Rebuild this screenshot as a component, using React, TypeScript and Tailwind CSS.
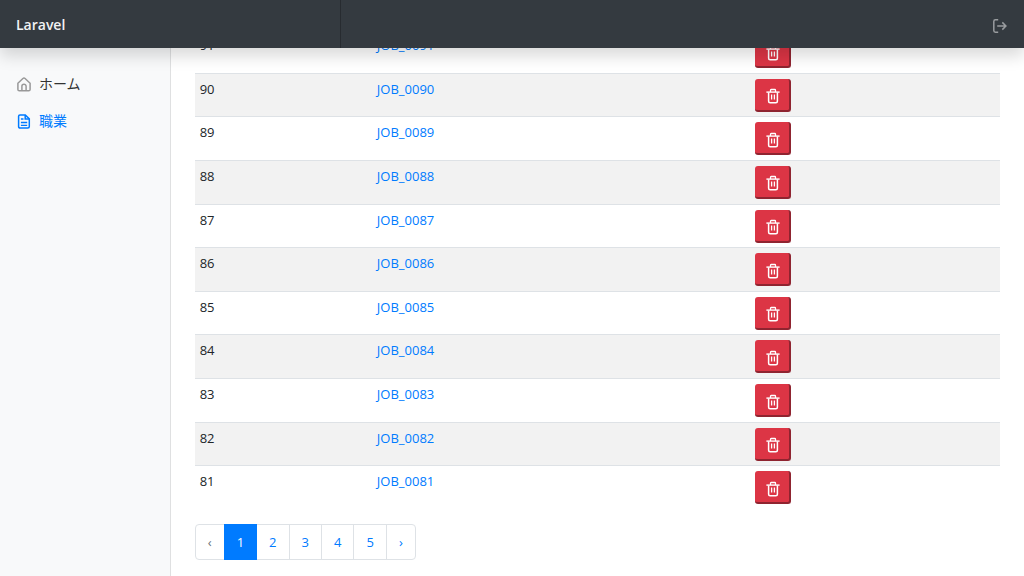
function HomeIcon() {
  return (
    <svg width="14" height="15" viewBox="0 0 14 15" fill="none" stroke="currentColor" strokeWidth="1.5">
      <path d="M.9 6.2 5.9 1.5Q7 .6 8.1 1.5L13.1 6.2V12.4Q13.1 13.8 11.7 13.8H2.3Q.9 13.8.9 12.4Z" />
      <path d="M4.9 13.8V9.3a2.1 2.1 0 0 1 4.2 0V13.8" />
    </svg>
  );
}

function FileIcon() {
  return (
    <svg width="14" height="15" viewBox="0 0 14 15" fill="none" stroke="currentColor" strokeWidth="1.5">
      <path d="M3 .9H8.300L12.300 4.900V12.600Q12.300 14.100 10.800 14.100H3.100Q1.600 14.100 1.600 12.600V2.300Q1.600.9 3 .9Z" />
      <path d="M8.200 1V5H12.200" />
      <path d="M3.900 5H6.500M3.900 8.500H10.200M3.900 11.400H10.200" strokeWidth="1.3" />
    </svg>
  );
}

function TrashIcon() {
  return (
    <svg width="14" height="16" viewBox="0 0 14 16" fill="none" stroke="currentColor">
      <path d="M4.500 4V2.200Q4.500 1.500 5.200 1.500H8.800Q9.500 1.500 9.500 2.200V4" strokeWidth="1.3" />
      <path d="M.4 4.100H13.600" strokeWidth="1.4" />
      <path d="M2.600 4.500V13.200Q2.600 14.700 4.100 14.700H9.900Q11.400 14.700 11.400 13.200V4.500" strokeWidth="1.5" />
      <path d="M5.600 6.500V11.600M8.400 6.500V11.600" strokeWidth="1.3" />
    </svg>
  );
}

function LogOutIcon() {
  return (
    <svg width="14" height="14" viewBox="0 0 14 14" fill="none" stroke="currentColor" strokeWidth="1.5">
      <path d="M5.200.8H2.400Q.8.8.8 2.400V11.600Q.8 13.200 2.400 13.200H5.200" />
      <path d="M4.200 7H13M9.300 3.400 12.900 7 9.300 10.600" />
    </svg>
  );
}

const jobs = [91, 90, 89, 88, 87, 86, 85, 84, 83, 82, 81].map((id) => ({
  id,
  name: `JOB_${String(id).padStart(4, "0")}`,
}));

const pages = [2, 3, 4, 5];

function Header() {
  return (
    <header className="sticky top-0 z-10 flex h-12 items-stretch bg-[#343a40] shadow-[0_8px_16px_rgba(0,0,0,0.15)]">
      <a
        href="#"
        className="flex w-1/3 items-center border-r border-[#272b30] px-4 pt-px text-[14px] font-semibold text-[#f1f2f3]"
      >
        Laravel
      </a>
      <button
        type="button"
        aria-label="ログアウト"
        className="ml-auto flex items-center px-[17px] pt-1 text-[#999c9f]"
      >
        <LogOutIcon />
      </button>
    </header>
  );
}

function Sidebar() {
  return (
    <nav className="w-1/6 shrink-0 border-r border-[#dfe0e1] bg-[#f8f9fa] pt-[17px] font-['Noto_Sans_CJK_JP',sans-serif] text-[14px]">
      <ul>
        <li>
          <a href="#" className="flex h-[37px] items-center gap-2 px-[17px] text-[#333333]">
            <span className="shrink-0 pt-0.5 text-[#999999]">
              <HomeIcon />
            </span>
            ホーム
          </a>
        </li>
        <li>
          <a href="#" className="flex h-[37px] items-center gap-2 px-[17px] text-[#007bff]">
            <span className="shrink-0 pt-0.5">
              <FileIcon />
            </span>
            職業
          </a>
        </li>
      </ul>
    </nav>
  );
}

function JobTable() {
  return (
    <table className="h-[480px] w-full table-fixed border-collapse">
      <colgroup>
        <col className="w-[22%]" />
        <col className="w-[47%]" />
        <col className="w-[31%]" />
      </colgroup>
      <tbody>
        {jobs.map((job) => (
          <tr key={job.id} className="border-t border-[#dee2e6] even:bg-[#f2f2f2]">
            <td className="px-[5px] pt-[5px] align-top">{job.id}</td>
            <td className="px-[5px] pt-[5px] align-top">
              <a href="#" className="text-[#007bff]">
                {job.name}
              </a>
            </td>
            <td className="px-[5px] pt-[5px] align-top">
              <button
                type="button"
                aria-label={`${job.name} を削除`}
                className="flex h-[33px] w-9 items-center justify-center rounded-[3px] border-r-2 border-b-2 border-[#8f2430] bg-[#dc3545] pt-1 pl-px text-white"
              >
                <TrashIcon />
              </button>
            </td>
          </tr>
        ))}
      </tbody>
    </table>
  );
}

function Pagination() {
  return (
    <ul className="mt-[15px] flex h-9 text-[#007bff]">
      <li className="flex w-[30px] items-center justify-center rounded-l border border-[#dee2e6] text-[#6c757d]">
        ‹
      </li>
      <li className="-ml-px flex items-center border border-[#007bff] bg-[#007bff] px-3 text-white">1</li>
      {pages.map((page) => (
        <li key={page} className="flex">
          <a href="#" className="flex items-center border border-l-0 border-[#dee2e6] px-3">
            {page}
          </a>
        </li>
      ))}
      <li className="-ml-px flex w-[30px]">
        <a
          href="#"
          aria-label="次へ"
          className="flex grow items-center justify-center rounded-r border border-[#dee2e6]"
        >
          ›
        </a>
      </li>
    </ul>
  );
}

export default function App() {
  return (
    <div className="flex min-h-screen flex-col bg-white font-['Open_Sans','Noto_Sans_CJK_JP',sans-serif] text-[13px] leading-[21px] text-[#212529]">
      <Header />
      <div className="flex grow">
        <Sidebar />
        <main className="-mt-[19px] grow px-6 pb-4">
          <JobTable />
          <Pagination />
        </main>
      </div>
    </div>
  );
}
